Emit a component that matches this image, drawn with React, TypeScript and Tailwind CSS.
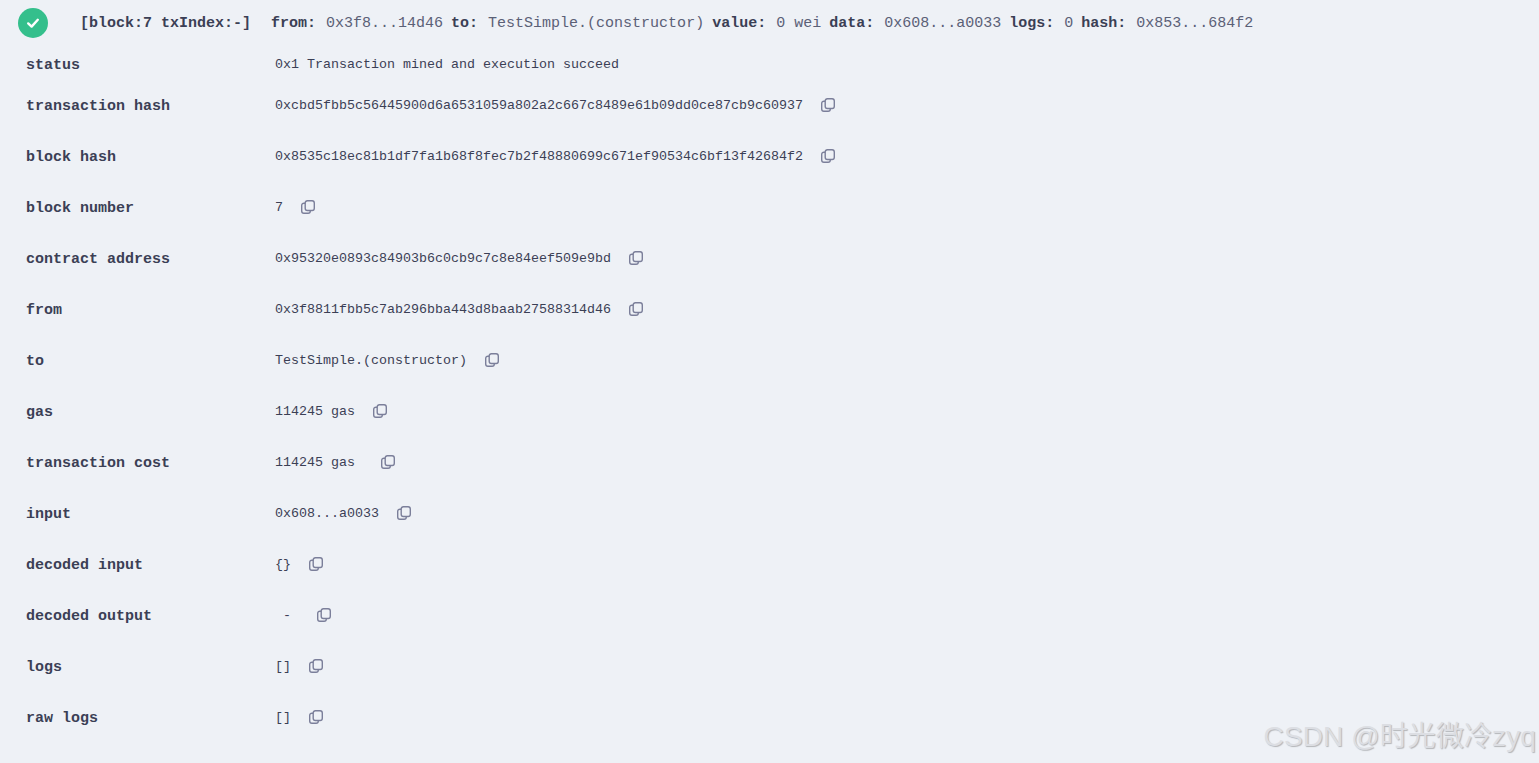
import React from 'react';

const rows = [
  { label: 'status', value: '0x1 Transaction mined and execution succeed', copy: false, first: true },
  { label: 'transaction hash', value: '0xcbd5fbb5c56445900d6a6531059a802a2c667c8489e61b09dd0ce87cb9c60937', copy: true },
  { label: 'block hash', value: '0x8535c18ec81b1df7fa1b68f8fec7b2f48880699c671ef90534c6bf13f42684f2', copy: true },
  { label: 'block number', value: '7', copy: true },
  { label: 'contract address', value: '0x95320e0893c84903b6c0cb9c7c8e84eef509e9bd', copy: true },
  { label: 'from', value: '0x3f8811fbb5c7ab296bba443d8baab27588314d46', copy: true },
  { label: 'to', value: 'TestSimple.(constructor)', copy: true },
  { label: 'gas', value: '114245 gas', copy: true },
  { label: 'transaction cost', value: '114245 gas ', copy: true },
  { label: 'input', value: '0x608...a0033', copy: true },
  { label: 'decoded input', value: '{}', copy: true },
  { label: 'decoded output', value: ' - ', copy: true },
  { label: 'logs', value: '[]', copy: true },
  { label: 'raw logs', value: '[]', copy: true },
];

const summary = [
  ['from:', '0x3f8...14d46'],
  ['to:', 'TestSimple.(constructor)'],
  ['value:', '0 wei'],
  ['data:', '0x608...a0033'],
  ['logs:', '0'],
  ['hash:', '0x853...684f2'],
];

const CopyIcon = () => (
  <svg viewBox="0 0 14 14" className="w-[14px] h-[14px] ml-[18px] -mt-[2px] shrink-0 text-[#7b7f9a]" fill="none" stroke="currentColor" strokeWidth="1.4">
    <rect x="4.2" y="0.7" width="9.1" height="9.8" rx="2.2" />
    <path d="M4.2 3.2H2.9A2.2 2.2 0 0 0 .7 5.4v5.7a2.2 2.2 0 0 0 2.2 2.2h4.2a2.2 2.2 0 0 0 2.2-2.2v-.6" />
  </svg>
);

export default function App() {
  return (
    <div className="relative h-[763px] overflow-hidden bg-[#eef1f6] font-['Liberation_Mono','Noto_Sans_CJK_SC',monospace] text-[#3b3f55]">
      {/* Tx summary */}
      <div className="h-[54px] flex items-start pt-2 pl-[18px]">
        <div className="w-[30px] h-[30px] rounded-full bg-[#34bf8c] flex items-center justify-center shrink-0">
          <svg viewBox="0 0 14 14" className="w-[14px] h-[14px]" fill="none" stroke="white" strokeWidth="2.4" strokeLinecap="round" strokeLinejoin="round">
            <path d="M2.2 7.4 5.6 10.6 11.8 3.8" />
          </svg>
        </div>
        <div className="ml-[32px] h-[33px] flex items-center text-[15px] whitespace-pre">
          <span className="font-bold">[block:7 txIndex:-]</span>
          <span className="ml-5 flex gap-[8px]">
            {summary.map(([k, v]) => (
              <span key={k}>
                <span className="font-bold">{k}</span>
                <span className="ml-[10px] text-[#5b6076]">{v}</span>
              </span>
            ))}
          </span>
        </div>
      </div>

      {/* Details table */}
      <div className="pl-[26px]">
        {rows.map((r) => (
          <div key={r.label} className={`flex items-start ${r.first ? 'h-[41px]' : 'h-[51px]'}`}>
            <div className="w-[249px] h-6 flex items-center text-[15px] font-bold shrink-0">{r.label}</div>
            <div className="h-[22px] flex items-center text-[13.33px] whitespace-pre">
              {r.value}
              {r.copy && <CopyIcon />}
            </div>
          </div>
        ))}
      </div>

      {/* CSDN watermark */}
      <div className="absolute right-[3px] top-[717px] font-['Liberation_Sans','Noto_Sans_CJK_SC',sans-serif] text-[28px] leading-[40px] tracking-[0.1px] whitespace-nowrap text-[#dcdee3] [text-shadow:1px_1px_1px_#b4b6ba]">
        CSDN @时光微冷zyq
      </div>
    </div>
  );
}
